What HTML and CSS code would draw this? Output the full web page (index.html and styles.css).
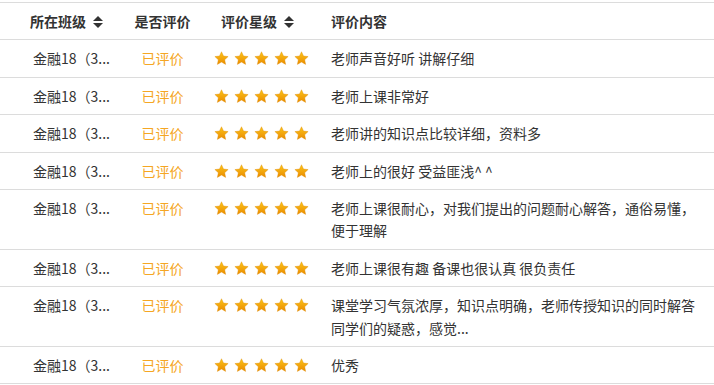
FILE: index.html
```html
<!DOCTYPE html>
<html lang="zh-CN">
<head>
<meta charset="utf-8">
<link rel="stylesheet" href="styles.css">
</head>
<body>
<svg width="0" height="0" class="defs" aria-hidden="true">
  <defs>
    <linearGradient id="sg" x1="0" y1="0" x2="0" y2="1">
      <stop offset="0" stop-color="#fcc419"/>
      <stop offset="1" stop-color="#ea8c00"/>
    </linearGradient>
    <symbol id="star" viewBox="0 0 24 24">
      <path d="M12 1.2l3.2 6.8 7.4.9-5.5 5.1 1.5 7.4L12 17.7l-6.6 3.7 1.5-7.4L1.4 8.9l7.4-.9z" fill="url(#sg)" stroke="#e08a00" stroke-width=".6" stroke-linejoin="round"/>
    </symbol>
  </defs>
</svg>
<table class="tbl">
  <colgroup>
    <col class="w1"><col class="w2"><col class="w3"><col class="w4">
  </colgroup>
  <thead>
    <tr>
      <th class="h1">所在班级<span class="sort"></span></th>
      <th class="h2">是否评价</th>
      <th class="h3">评价星级<span class="sort"></span></th>
      <th class="h4">评价内容</th>
    </tr>
  </thead>
  <tbody id="rows"></tbody>
</table>
<script src="app.js"></script>
</body>
</html>
```
FILE: app.js
```js
const data = [
  "老师声音好听 讲解仔细",
  "老师上课非常好",
  "老师讲的知识点比较详细，资料多",
  "老师上的很好 受益匪浅^ ^",
  "老师上课很耐心，对我们提出的问题耐心解答，通俗易懂，便于理解",
  "老师上课很有趣 备课也很认真 很负责任",
  "课堂学习气氛浓厚，知识点明确，老师传授知识的同时解答同学们的疑惑，感觉...",
  "优秀"
];
const star = '<svg class="star" viewBox="0 0 24 24"><use href="#star"/></svg>';
const tb = document.getElementById('rows');
data.forEach(t => {
  const tr = document.createElement('tr');
  tr.innerHTML =
    '<td class="c1">金融18（3...</td>' +
    '<td class="c2">已评价</td>' +
    '<td class="c3"><div class="stars">' + star.repeat(5) + '</div></td>' +
    '<td class="c4">' + t + '</td>';
  tb.appendChild(tr);
});
```
FILE: styles.css
```css
html, body {
  margin: 0;
  padding: 0;
  background: #fff;
}
body {
  padding-top: 2px;
  font-family: "Noto Sans CJK SC", "Noto Sans", sans-serif;
  font-size: 14px;
  color: #333;
}
.defs {
  position: absolute;
  width: 0;
  height: 0;
}
.tbl {
  width: 714px;
  border-collapse: collapse;
  table-layout: fixed;
  border-top: 1px solid #dcdcdc;
}
.w1 { width: 125px; }
.w2 { width: 75px; }
.w3 { width: 121px; }
.w4 { width: 393px; }
th, td {
  padding: 7px 0;
  line-height: 22.4px;
  border-bottom: 1px solid #dcdcdc;
  vertical-align: top;
}
th {
  font-weight: bold;
  color: #333;
}
.h1 {
  text-align: left;
  padding-left: 30px;
}
.h2 { text-align: center; }
.h3 {
  text-align: center;
  padding-right: 6px;
}
.h4 {
  text-align: left;
  padding-left: 10px;
}
.sort {
  display: inline-block;
  width: 10px;
  height: 12px;
  margin-left: 7px;
  vertical-align: -1px;
  position: relative;
}
.sort::before,
.sort::after {
  content: "";
  position: absolute;
  left: 0;
  border-left: 5px solid transparent;
  border-right: 5px solid transparent;
}
.sort::before {
  top: 0;
  border-bottom: 5px solid #333;
}
.sort::after {
  bottom: 0;
  border-top: 5px solid #333;
}
.c1 {
  padding-left: 33px;
  white-space: nowrap;
}
.c2 {
  text-align: center;
  color: #f5a623;
}
.stars {
  display: flex;
  justify-content: center;
  gap: 5px;
  padding-top: 4px;
  padding-left: 1px;
}
.star {
  width: 15px;
  height: 15px;
  display: block;
}
.c4 {
  padding-left: 10px;
  padding-right: 12px;
}
```
